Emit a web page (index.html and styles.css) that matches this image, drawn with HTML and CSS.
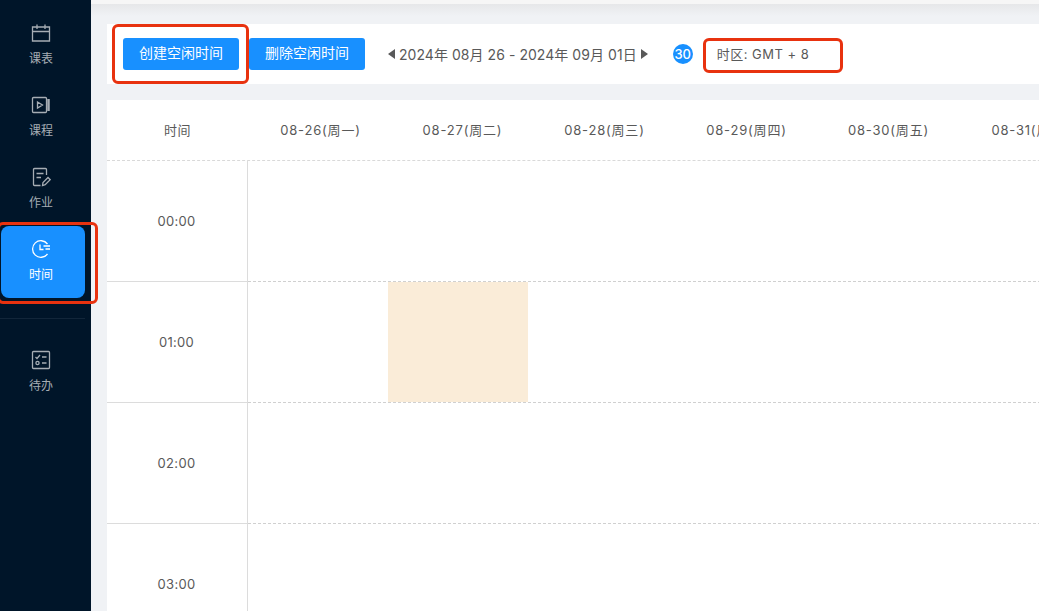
FILE: index.html
```html
<!DOCTYPE html>
<html lang="zh-CN">

<head>
    <meta charset="UTF-8">
    <title>时间</title>
    <link rel="stylesheet" href="styles.css">
</head>

<body>
    <aside class="sidebar">
        <a class="nav-item">
            <svg class="nav-icon" viewBox="0 0 20 20"><path d="M1.500 4h17v14h-17zM1.500 8.500h17M6 1.500v4.500M14 1.500v4.500"/></svg>
            <span>课表</span>
        </a>
        <a class="nav-item">
            <svg class="nav-icon" viewBox="0 0 20 20"><path d="M2.500 2.500h12a1 1 0 0 1 1 1v13a1 1 0 0 1-1 1h-12a1 1 0 0 1-1-1v-13a1 1 0 0 1 1-1zM6.500 7l5 3-5 3z"/><path class="thick" d="M17.500 4v12"/></svg>
            <span>课程</span>
        </a>
        <a class="nav-item">
            <svg class="nav-icon" viewBox="0 0 20 20"><path d="M15.500 8V2.500a1 1 0 0 0-1-1h-11a1 1 0 0 0-1 1v15a1 1 0 0 0 1 1h6M5.500 6.500h7M5.500 10.500h4.500M11.500 18.500l.5-3 5-5 2.200 2.200-5 5z"/></svg>
            <span>作业</span>
        </a>
        <a class="nav-item active">
            <svg class="nav-icon" viewBox="0 0 20 20"><path d="M16.500 5a8.300 8.300 0 1 0 0 10M9 5.500v5h3.500M12.500 7h6.500M14.500 10h4.500"/></svg>
            <span>时间</span>
        </a>
        <div class="nav-divider"></div>
        <a class="nav-item">
            <svg class="nav-icon" viewBox="0 0 20 20"><path d="M2.500 1.500h15a1 1 0 0 1 1 1v15a1 1 0 0 1-1 1h-15a1 1 0 0 1-1-1v-15a1 1 0 0 1 1-1zM4.500 7l1.500 1.500L9 5M11 7h4.500M11 13h4.500"/><circle cx="6.500" cy="13" r="1.600"/></svg>
            <span>待办</span>
        </a>
    </aside>

    <main class="content">
        <div class="top-strip"></div>

        <section class="toolbar">
            <button class="btn">创建空闲时间</button>
            <button class="btn">删除空闲时间</button>
            <div class="week-switch">
                <span class="arrow arrow-left"></span>
                <span>2024年 08月 26 - 2024年 09月 01日</span>
                <span class="arrow arrow-right"></span>
            </div>
            <span class="badge">30</span>
            <span class="timezone">时区: GMT + 8</span>
        </section>

        <section class="schedule">
            <div class="head-row">
                <div class="head-cell">时间</div>
                <div class="head-cell day">08-26(周一)</div>
                <div class="head-cell day">08-27(周二)</div>
                <div class="head-cell day">08-28(周三)</div>
                <div class="head-cell day">08-29(周四)</div>
                <div class="head-cell day">08-30(周五)</div>
                <div class="head-cell day">08-31(周六)</div>
            </div>
            <div class="time-row">
                <div class="time-cell">00:00</div>
                <div class="slots"></div>
            </div>
            <div class="time-row">
                <div class="time-cell">01:00</div>
                <div class="slots"><div class="free-slot"></div></div>
            </div>
            <div class="time-row">
                <div class="time-cell">02:00</div>
                <div class="slots"></div>
            </div>
            <div class="time-row">
                <div class="time-cell">03:00</div>
                <div class="slots"></div>
            </div>
        </section>
    </main>

    <!-- annotation boxes drawn over the screenshot -->
    <div class="mark mark-nav"></div>
    <div class="mark mark-create"></div>
    <div class="mark mark-zone"></div>
</body>

</html>
```

FILE: styles.css
```css
/* Reset default */
* {
    box-sizing: border-box;
}

html,
body {
    margin: 0;
    height: 100%;
    overflow: hidden;
}

body {
    display: flex;
    background-color: #f0f2f5;
    color: #595959;
    font-family: Inter, "Noto Sans CJK SC", sans-serif;
    font-size: 13px;
}

/* Sidebar */
.sidebar {
    width: 91px;
    flex-shrink: 0;
    padding: 10px 6px 0 1px;
    background-color: #001529;
}

.nav-item {
    display: flex;
    flex-direction: column;
    align-items: center;
    gap: 7px;
    height: 72px;
    padding: 13px 4px 0 0;
    color: #a6adb4;
    font-size: 12px;
    line-height: 17px;
    border-radius: 8px;
}

.nav-icon {
    width: 20px;
    height: 20px;
    fill: none;
    stroke: currentColor;
    stroke-width: 1.300;
}

.nav-icon .thick {
    stroke-width: 2.500;
}

.nav-item.active {
    background-color: #1890ff;
    color: #fff;
}

.nav-divider {
    height: 1px;
    margin: 20px 0 18px -1px;
    background-color: #12263a;
}

/* Main area */
.content {
    flex: 1;
    min-width: 0;
    padding-left: 16px;
}

.top-strip {
    height: 24px;
    margin-left: -16px;
    background: linear-gradient(#f6f6f6 4px, #e6e7e9 4px, #f0f2f5 16px);
}

.toolbar {
    display: flex;
    align-items: center;
    height: 60px;
    padding-left: 16px;
    background-color: #fff;
}

.btn {
    width: 116px;
    height: 32px;
    margin-right: 10px;
    padding: 0 0 4px;
    border: none;
    border-radius: 3px;
    background-color: #1890ff;
    color: #fff;
    font-family: inherit;
    font-size: 14px;
}

.week-switch {
    display: flex;
    align-items: center;
    gap: 4px;
    margin-left: 13px;
    font-size: 14px;
    letter-spacing: 0.050px;
    white-space: nowrap;
}

.arrow {
    width: 0;
    height: 0;
    border-top: 5px solid transparent;
    border-bottom: 5px solid transparent;
}

.arrow-left {
    border-right: 7px solid #595959;
}

.arrow-right {
    border-left: 7px solid #595959;
}

.badge {
    width: 20px;
    height: 20px;
    margin-left: 25px;
    border-radius: 50%;
    background-color: #1890ff;
    color: #fff;
    font-size: 13px;
    font-weight: 500;
    line-height: 20px;
    text-align: center;
}

.timezone {
    margin-left: 24px;
    padding-bottom: 1px;
    letter-spacing: 0.500px;
    white-space: nowrap;
}

/* Schedule table */
.schedule {
    margin-top: 16px;
    width: 1134px;
    background-color: #fff;
}

.head-row {
    display: grid;
    grid-template-columns: 141px repeat(7, 142px);
    height: 61px;
    border-bottom: 1px dashed #d9d9d9;
}

.head-cell {
    display: flex;
    align-items: center;
    justify-content: center;
    padding-bottom: 1px;
    letter-spacing: 0.500px;
    white-space: nowrap;
}

.head-cell.day {
    padding-left: 3px;
    letter-spacing: 0.800px;
}

.time-row {
    display: grid;
    grid-template-columns: 141px 1fr;
    height: 121px;
}

.time-cell {
    display: flex;
    align-items: center;
    justify-content: center;
    padding-right: 1px;
    letter-spacing: 0.300px;
    border-right: 1px solid #dcdcdc;
    border-bottom: 1px solid #dcdcdc;
}

.slots {
    display: grid;
    grid-template-columns: 140px repeat(6, 142px);
    border-bottom: 1px dashed #d0d0d0;
}

.free-slot {
    grid-column: 2;
    width: 140px;
    background-color: #faecd8;
}

/* Annotation boxes */
.mark {
    position: absolute;
    border: 3px solid #e8320f;
    border-radius: 6px;
}

.mark-nav {
    left: -3px;
    top: 222px;
    width: 101px;
    height: 82px;
}

.mark-create {
    left: 112px;
    top: 24px;
    width: 137px;
    height: 60px;
}

.mark-zone {
    left: 703px;
    top: 38px;
    width: 140px;
    height: 35px;
}
```
